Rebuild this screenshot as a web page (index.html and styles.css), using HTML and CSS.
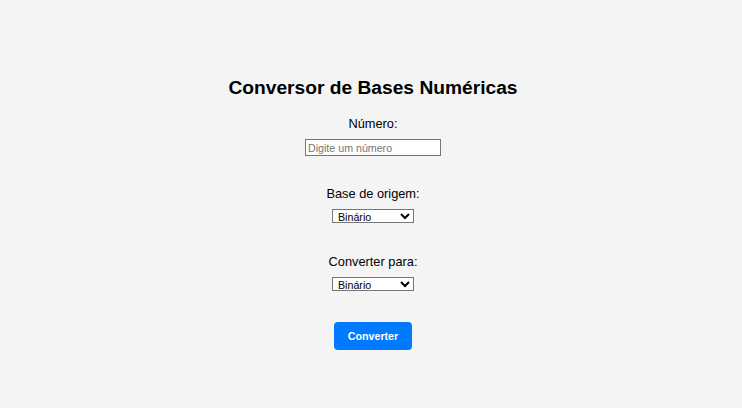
FILE: index.html
```html
<!DOCTYPE html>
<html lang="pt">
<head>
<meta charset="utf-8">
<title>Conversor de Bases Numéricas</title>
<link rel="stylesheet" href="styles.css">
</head>
<body>
<main class="container">
  <h1 class="title">Conversor de Bases Numéricas</h1>
  <form class="form">
    <label class="label" for="numero">Número:</label>
    <input class="input" id="numero" type="text" placeholder="Digite um número">
    <label class="label" for="origem">Base de origem:</label>
    <select class="select" id="origem">
      <option>Binário</option>
      <option>Octal</option>
      <option>Decimal</option>
      <option>Hexadecimal</option>
    </select>
    <label class="label" for="destino">Converter para:</label>
    <select class="select" id="destino">
      <option>Binário</option>
      <option>Octal</option>
      <option>Decimal</option>
      <option>Hexadecimal</option>
    </select>
    <button class="button" type="button">Converter</button>
  </form>
</main>
</body>
</html>
```
FILE: styles.css
```css
html, body {
  margin: 0;
  padding: 0;
  background: #f4f4f4;
  font-family: "Liberation Sans", Arial, sans-serif;
  color: #000;
}
.container {
  display: flex;
  flex-direction: column;
  align-items: center;
  padding-top: 77px;
  padding-left: 4px;
}
.title {
  margin: 0;
  font-size: 19.2px;
  line-height: 22px;
  font-weight: bold;
}
.form {
  display: flex;
  flex-direction: column;
  align-items: center;
  padding-top: 17px;
}
.label {
  font-size: 12.8px;
  line-height: 15px;
  margin-bottom: 8px;
}
.input,
.select {
  box-sizing: border-box;
  margin: 0 0 29px;
  border: 1px solid #767676;
  border-radius: 0;
  background: #fff;
  font-family: "Liberation Sans", Arial, sans-serif;
  font-size: 10.67px;
  color: #000;
}
.input {
  width: 136px;
  height: 17px;
  padding: 0 2px;
  margin-bottom: 30px;
}
.input::placeholder {
  color: #757575;
}
.select {
  width: 82px;
  height: 14px;
  padding: 0 0 0 1px;
  margin-top: 0;
  margin-bottom: 31px;
}
.button {
  width: 78px;
  height: 28px;
  border: none;
  border-radius: 4px;
  background: #007bff;
  color: #fff;
  font-family: "Liberation Sans", Arial, sans-serif;
  font-size: 10.67px;
  font-weight: bold;
}
```
